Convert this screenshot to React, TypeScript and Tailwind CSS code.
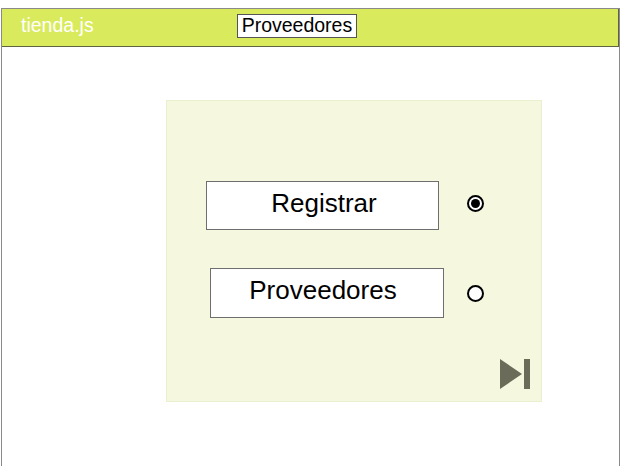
import React from "react";

function Radio({ checked }: { checked: boolean }) {
  return (
    <div className="w-[17px] h-[17px] rounded-full border-2 border-black bg-white flex items-center justify-center">
      {checked && <div className="w-[9px] h-[9px] rounded-full bg-black" />}
    </div>
  );
}

export default function App() {
  return (
    <div className="w-[628px] h-[466px] bg-white overflow-hidden" style={{ fontFamily: '"Liberation Sans", Arial, sans-serif' }}>
      <div className="mt-[8px] ml-[1px] w-[619px] h-[460px] border-x border-t border-[#8a8a8a]">
        <div className="h-[38px] bg-[#d9eb5c] border-b border-r border-[#5f6340] flex items-center">
          <span className="ml-[19px] mt-[-4px] text-white text-[19.5px] leading-none">tienda.js</span>
          <button className="ml-[143px] mt-[-3px] h-[24px] px-[4px] bg-white border border-[#555] text-black text-[19.5px] leading-none">
            Proveedores
          </button>
        </div>
        <div className="pt-[53px] pl-[164px]">
          <div className="w-[376px] h-[302px] bg-[#f5f8df] border border-[#e9f0cf] flex flex-col">
            <div className="flex items-center mt-[80px] ml-[39px]">
              <div className="w-[233px] h-[49px] bg-white border border-[#6e6e6e] flex items-center justify-center text-black text-[26px]">
                <span className="ml-[3px] mt-[-5px]">Registrar</span>
              </div>
              <div className="ml-[28px] mt-[-4px]">
                <Radio checked={true} />
              </div>
            </div>
            <div className="flex items-center mt-[38px] ml-[43px]">
              <div className="w-[234px] h-[50px] bg-white border border-[#6e6e6e] flex items-center justify-center text-black text-[26px]">
                <span className="ml-[-8px] mt-[-5px]">Proveedores</span>
              </div>
              <div className="ml-[23px]">
                <Radio checked={false} />
              </div>
            </div>
            <div className="flex justify-end mt-[41px] mr-[10px]">
              <svg width="31" height="30" viewBox="0 0 31 30">
                <polygon points="0,0 22,15 0,30" fill="#6b6b5a" />
                <rect x="24" y="0" width="6" height="30" fill="#6b6b5a" />
              </svg>
            </div>
          </div>
        </div>
      </div>
    </div>
  );
}
